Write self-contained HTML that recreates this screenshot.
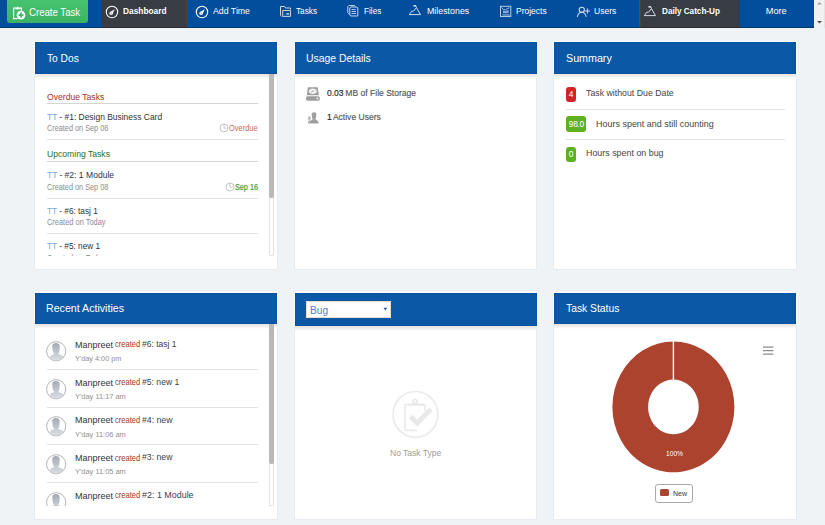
<!DOCTYPE html>
<html><head><meta charset="utf-8"><style>
html,body{margin:0;padding:0;}
body{width:825px;height:525px;overflow:hidden;position:relative;background:#eff3f6;font-family:"Liberation Sans",sans-serif;}
.t{position:absolute;white-space:pre;line-height:1;}
.pn{position:absolute;background:#fff;border:1.2px solid #e7ecf3;border-bottom-width:1.6px;box-sizing:border-box;}
.pw{position:absolute;background:#fff;}
.ph{position:absolute;background:#0b59a6;box-shadow:inset 0 0 1px 0.5px #004d9a;}
.sh{position:absolute;height:5px;background:linear-gradient(rgba(215,195,180,0.45),rgba(0,0,0,0.08) 35%,rgba(0,0,0,0));}
</style></head><body>
<div style="position:absolute;left:0;top:0;width:814px;height:28px;background:#034e9c"></div>
<div style="position:absolute;left:102px;top:0;width:85px;height:28px;background:#383d44;box-shadow:inset -1px 0 0 #4b4238"></div>
<div style="position:absolute;left:640px;top:0;width:100px;height:28px;background:#383d44;box-shadow:inset 1px 0 0 #4b4238"></div>
<div style="position:absolute;left:639px;top:0;width:1px;height:27px;background:#0a5cb8"></div>
<div style="position:absolute;left:0;top:27px;width:814px;height:1px;background:rgba(0,0,0,0.28)"></div>
<div style="position:absolute;left:814px;top:0;width:11px;height:28px;background:#f1f1f1;border-right:1px solid #e4e4e4;box-sizing:border-box"></div>
<svg style="position:absolute;left:814px;top:0" width="11" height="28"><path d="M3 4.5 L5.5 2 L8 4.5Z" fill="#a3a3a3"/><path d="M3 21 L5.5 23.5 L8 21Z" fill="#505050"/></svg>
<div style="position:absolute;left:7px;top:0;width:81px;height:23.3px;background:linear-gradient(#47c26e,#3ab462);border-radius:0 0 3px 3px"></div>
<svg style="position:absolute;left:8px;top:2px" width="24" height="22" viewBox="0 0 24 22">
<path d="M9.6 16.6 H5.6 V6.2 H8 M11.2 6.2 H13.4 V9.2" fill="none" stroke="#fff" stroke-width="1.2"/>
<path d="M7.6 7.2 V5.6 H8.6 Q9.5 3.6 10.4 5.6 H11.6 V7.2 Z" fill="#fff"/>
<circle cx="13" cy="13.1" r="4.4" fill="#fff"/>
<path d="M13 10.6 V15.6 M10.5 13.1 H15.5" stroke="#3cb863" stroke-width="1.7"/>
</svg>
<div class="t" style="left:28.70px;top:7.67px;font-size:10.2px;color:#fff;transform:scaleX(0.9436);transform-origin:0 0;">Create Task</div>
<svg style="position:absolute;left:105px;top:4.5px" width="14" height="14" viewBox="0 0 14 14">
<circle cx="7" cy="7" r="5.7" fill="none" stroke="#fff" stroke-width="1.1"/>
<path d="M4.9 7.3 L9.8 4.2 L7.2 9.4 Z" fill="#fff"/><circle cx="6.1" cy="8.2" r="1.7" fill="#fff"/><circle cx="6.1" cy="8.2" r="0.6" fill="#777"/></svg>
<div class="t" style="left:123.00px;top:7.01px;font-size:9.2px;color:#fff;font-weight:bold;transform:scaleX(0.9079);transform-origin:0 0;">Dashboard</div>
<svg style="position:absolute;left:195px;top:4.5px" width="14" height="14" viewBox="0 0 14 14">
<circle cx="7" cy="7" r="5.7" fill="none" stroke="#fff" stroke-width="1.1"/>
<path d="M4.9 7.3 L9.8 4.2 L7.2 9.4 Z" fill="#fff"/><circle cx="6.1" cy="8.2" r="1.7" fill="#fff"/><circle cx="6.1" cy="8.2" r="0.6" fill="#777"/></svg>
<div class="t" style="left:213.00px;top:7.21px;font-size:9.2px;color:#fff;transform:scaleX(0.9530);transform-origin:0 0;">Add Time</div>
<svg style="position:absolute;left:277px;top:2px" width="24" height="22" viewBox="0 0 24 22">
<path d="M3.5 13.5 V4.5 H7.6 L8.6 6 H13.5 V7.5" fill="none" stroke="#c9d6e8" stroke-width="1"/>
<path d="M5.7 14.4 V8.5 H13.5 V14.4 Z" fill="none" stroke="#c9d6e8" stroke-width="1"/>
<path d="M3.5 13.5 L4.5 14.4" stroke="#c9d6e8" stroke-width="1"/>
<rect x="9.3" y="11.2" width="2.8" height="1.4" fill="#c9d6e8"/></svg>
<div class="t" style="left:296.30px;top:7.21px;font-size:9.2px;color:#fff;transform:scaleX(0.8959);transform-origin:0 0;">Tasks</div>
<svg style="position:absolute;left:344px;top:2px" width="24" height="22" viewBox="0 0 24 22">
<path d="M5.5 12.5 L3.8 10.5 V4.5 L4.8 3.5 H10.5 L11.5 4.5" fill="none" stroke="#c9d6e8" stroke-width="1"/>
<path d="M5.8 6 L6.8 5 H12.8 L13.8 6 V14 H6.8 L5.8 13 Z" fill="none" stroke="#c9d6e8" stroke-width="1"/>
<path d="M7.5 7.5 H11.5 M7.5 9.5 H12 M7.5 11.5 H12" stroke="#c9d6e8" stroke-width="0.9"/></svg>
<div class="t" style="left:363.70px;top:7.21px;font-size:9.2px;color:#fff;transform:scaleX(0.8912);transform-origin:0 0;">Files</div>
<svg style="position:absolute;left:404px;top:0px" width="24" height="22" viewBox="0 0 24 22">
<path d="M5.3 14.6 H16.5 L12.4 7.6" fill="none" stroke="#d0dae8" stroke-width="1"/>
<path d="M5.3 14.6 L7.7 11.2 H9.5 L12.5 7.5 L12 6" fill="none" stroke="#d0dae8" stroke-width="1"/>
<rect x="9.4" y="5" width="2.6" height="1.6" fill="#d0dae8"/></svg>
<div class="t" style="left:427.40px;top:7.21px;font-size:9.2px;color:#fff;transform:scaleX(0.9619);transform-origin:0 0;">Milestones</div>
<svg style="position:absolute;left:497px;top:2px" width="24" height="22" viewBox="0 0 24 22">
<rect x="3.5" y="4.3" width="10.3" height="10.2" fill="none" stroke="#b7c8df" stroke-width="1"/>
<path d="M4.5 5.5 L6.5 7.5 L8.5 8 L10.5 6.5 L12.3 5.8" stroke="#b7c8df" stroke-width="0.9" fill="none"/><path d="M6 8.5 L8.5 9.2 L11.5 7.8 V11.2 H6 Z" fill="#8aa6cc"/><path d="M5.5 13 H12.5 L12.8 13.6" stroke="#b7c8df" stroke-width="0.9" fill="none"/></svg>
<div class="t" style="left:516.30px;top:7.21px;font-size:9.2px;color:#fff;transform:scaleX(0.9244);transform-origin:0 0;">Projects</div>
<svg style="position:absolute;left:574px;top:2px" width="24" height="22" viewBox="0 0 24 22">
<circle cx="7.8" cy="7.8" r="2.6" fill="none" stroke="#d0dae8" stroke-width="1.1"/>
<path d="M3.3 14.8 Q4.5 10.3 7.8 10.3 Q11 10.3 12.3 14.8" fill="none" stroke="#d0dae8" stroke-width="1.1"/>
<path d="M13.4 6.4 V11.6 M10.8 9 H16" stroke="#d0dae8" stroke-width="1"/></svg>
<div class="t" style="left:593.50px;top:7.21px;font-size:9.2px;color:#fff;transform:scaleX(0.9287);transform-origin:0 0;">Users</div>
<svg style="position:absolute;left:639px;top:1px" width="24" height="22" viewBox="0 0 24 22">
<path d="M5.3 14.6 H16.5 L12.4 7.6" fill="none" stroke="#d0dae8" stroke-width="1"/>
<path d="M5.3 14.6 L7.7 11.2 H9.5 L12.5 7.5 L12 6" fill="none" stroke="#d0dae8" stroke-width="1"/>
<rect x="9.4" y="5" width="2.6" height="1.6" fill="#d0dae8"/></svg>
<div class="t" style="left:661.70px;top:7.01px;font-size:9.2px;color:#fff;font-weight:bold;transform:scaleX(0.8867);transform-origin:0 0;">Daily Catch-Up</div>
<div class="t" style="left:765.80px;top:7.21px;font-size:9.2px;color:#fff;">More</div>
<div class="pn" style="left:34px;top:41px;width:243.5px;height:228.7px"></div>
<div class="pw" style="left:34px;top:41px;width:243.5px;height:32.599999999999994px"></div>
<div class="ph" style="left:35px;top:42px;width:242.0px;height:31.599999999999994px"></div>
<div class="sh" style="left:35px;top:73.6px;width:241.5px"></div>
<div class="pn" style="left:293.5px;top:41px;width:243.5px;height:228.7px"></div>
<div class="pw" style="left:293.5px;top:41px;width:243.5px;height:32.599999999999994px"></div>
<div class="ph" style="left:294.5px;top:42px;width:242.0px;height:31.599999999999994px"></div>
<div class="sh" style="left:294.5px;top:73.6px;width:241.5px"></div>
<div class="pn" style="left:553px;top:41px;width:243.5px;height:228.7px"></div>
<div class="pw" style="left:553px;top:41px;width:243.5px;height:32.599999999999994px"></div>
<div class="ph" style="left:554px;top:42px;width:242.0px;height:31.599999999999994px"></div>
<div class="sh" style="left:554px;top:73.6px;width:241.5px"></div>
<div class="pn" style="left:34px;top:292px;width:243.5px;height:228px"></div>
<div class="pw" style="left:34px;top:292px;width:243.5px;height:32px"></div>
<div class="ph" style="left:35px;top:293px;width:242.0px;height:31px"></div>
<div class="sh" style="left:35px;top:324px;width:241.5px"></div>
<div class="pn" style="left:293.5px;top:292px;width:243.5px;height:228px"></div>
<div class="pw" style="left:293.5px;top:292px;width:243.5px;height:33.5px"></div>
<div class="ph" style="left:294.5px;top:293px;width:242.0px;height:32.5px"></div>
<div class="sh" style="left:294.5px;top:325.5px;width:241.5px"></div>
<div class="pn" style="left:553px;top:292px;width:243.5px;height:228px"></div>
<div class="pw" style="left:553px;top:292px;width:243.5px;height:32px"></div>
<div class="ph" style="left:554px;top:293px;width:242.0px;height:31px"></div>
<div class="sh" style="left:554px;top:324px;width:241.5px"></div>
<div class="t" style="left:47.00px;top:52.69px;font-size:11px;color:#fff;transform:scaleX(0.9266);transform-origin:0 0;">To Dos</div>
<div class="t" style="left:306.40px;top:52.69px;font-size:11px;color:#fff;transform:scaleX(0.9456);transform-origin:0 0;">Usage Details</div>
<div class="t" style="left:566.40px;top:52.69px;font-size:11px;color:#fff;transform:scaleX(0.9728);transform-origin:0 0;">Summary</div>
<div class="t" style="left:46.40px;top:303.19px;font-size:11px;color:#fff;transform:scaleX(0.9661);transform-origin:0 0;">Recent Activities</div>
<div class="t" style="left:566.40px;top:303.19px;font-size:11px;color:#fff;transform:scaleX(0.9390);transform-origin:0 0;">Task Status</div>
<div style="position:absolute;left:269.2px;top:73.5px;width:4.5px;height:182.2px;border:1px solid #e3e3e3;box-sizing:border-box;border-radius:0 0 1px 1px;background:#fff"></div>
<div style="position:absolute;left:269.2px;top:73.5px;width:4.5px;height:124.19999999999999px;background:#b9b9b9;border-radius:0 0 2px 2px"></div>
<div style="position:absolute;left:269.2px;top:324px;width:4.5px;height:181.7px;border:1px solid #e3e3e3;box-sizing:border-box;border-radius:0 0 1px 1px;background:#fff"></div>
<div style="position:absolute;left:269.2px;top:324px;width:4.5px;height:139.7px;background:#b9b9b9;border-radius:0 0 2px 2px"></div>
<div style="position:absolute;left:35px;top:73.5px;width:234px;height:182px;overflow:hidden"><div style="position:absolute;left:-35px;top:-73.5px;width:825px;height:525px"><div class="t" style="left:47.00px;top:91.87px;font-size:9.6px;color:#a63424;transform:scaleX(0.8976);transform-origin:0 0;">Overdue Tasks</div><div style="position:absolute;left:47px;top:103.0px;width:211px;height:1.4px;background:#d5d5d5"></div><div class="t" style="left:47.00px;top:112.04px;font-size:9.4px;color:#78a8dc;transform:scaleX(0.9003);transform-origin:0 0;">TT</div><div class="t" style="left:57.34px;top:112.04px;font-size:9.4px;color:#333;transform:scaleX(0.9003);transform-origin:0 0;"> - #1: Design Business Card</div><div class="t" style="left:47.00px;top:124.32px;font-size:8.6px;color:#8d8d8d;transform:scaleX(0.8496);transform-origin:0 0;">Created on Sep 08</div><svg style="position:absolute;left:218.5px;top:123.19999999999999px" width="10" height="10"><circle cx="5" cy="5" r="4" fill="none" stroke="#c4c4c4" stroke-width="1"/><path d="M5 1.8 V5.2 H7.6" fill="none" stroke="#c4c4c4" stroke-width="0.9"/></svg><div class="t" style="left:228.70px;top:124.32px;font-size:8.6px;color:#d46655;transform:scaleX(0.8660);transform-origin:0 0;">Overdue</div><div style="position:absolute;left:47px;top:138.7px;width:211px;height:1px;background:#e3e3e3"></div><div class="t" style="left:47.00px;top:149.17px;font-size:9.6px;color:#1f6f22;transform:scaleX(0.8965);transform-origin:0 0;">Upcoming Tasks</div><div style="position:absolute;left:47px;top:160.8px;width:211px;height:1.4px;background:#d5d5d5"></div><div class="t" style="left:47.00px;top:169.84px;font-size:9.4px;color:#78a8dc;transform:scaleX(0.9126);transform-origin:0 0;">TT</div><div class="t" style="left:57.48px;top:169.84px;font-size:9.4px;color:#333;transform:scaleX(0.9126);transform-origin:0 0;"> - #2: 1 Module</div><div class="t" style="left:47.00px;top:183.32px;font-size:8.6px;color:#8d8d8d;transform:scaleX(0.8496);transform-origin:0 0;">Created on Sep 08</div><svg style="position:absolute;left:224.5px;top:182.2px" width="10" height="10"><circle cx="5" cy="5" r="4" fill="none" stroke="#c4c4c4" stroke-width="1"/><path d="M5 1.8 V5.2 H7.6" fill="none" stroke="#c4c4c4" stroke-width="0.9"/></svg><div class="t" style="left:235.40px;top:183.15px;font-size:8.8px;color:#3aa33a;transform:scaleX(0.8245);transform-origin:0 0;-webkit-text-stroke:0.2px currentColor;">Sep 16</div><div style="position:absolute;left:47px;top:197.7px;width:211px;height:1px;background:#e3e3e3"></div><div class="t" style="left:47.00px;top:205.84px;font-size:9.4px;color:#78a8dc;transform:scaleX(0.8791);transform-origin:0 0;">TT</div><div class="t" style="left:57.09px;top:205.84px;font-size:9.4px;color:#333;transform:scaleX(0.8791);transform-origin:0 0;"> - #6: tasj 1</div><div class="t" style="left:47.00px;top:218.32px;font-size:8.6px;color:#8d8d8d;transform:scaleX(0.8647);transform-origin:0 0;">Created on Today</div><div style="position:absolute;left:47px;top:232.7px;width:211px;height:1px;background:#e3e3e3"></div><div class="t" style="left:47.00px;top:240.54px;font-size:9.4px;color:#78a8dc;transform:scaleX(0.8803);transform-origin:0 0;">TT</div><div class="t" style="left:57.11px;top:240.54px;font-size:9.4px;color:#333;transform:scaleX(0.8803);transform-origin:0 0;"> - #5: new 1</div><div class="t" style="left:47.00px;top:254.22px;font-size:8.6px;color:#8d8d8d;transform:scaleX(0.8647);transform-origin:0 0;">Created on Today</div></div></div>
<svg style="position:absolute;left:305px;top:86px" width="16" height="16" viewBox="0 0 16 16">
<path d="M3 1.2 H12.6 L13.9 9.2 H1.7 Z" fill="#9d9d9d"/>
<ellipse cx="7.8" cy="5.2" rx="3.9" ry="2.7" fill="#f2f2f2"/><path d="M6 6.4 L8.9 4.4" stroke="#9d9d9d" stroke-width="0.9"/>
<rect x="1" y="10.3" width="13.8" height="4.4" rx="1.6" fill="#9d9d9d"/><circle cx="12.3" cy="12.5" r="0.9" fill="#f2f2f2"/></svg>
<div class="t" style="left:326.50px;top:88.30px;font-size:9.8px;color:#222;transform:scaleX(0.8712);transform-origin:0 0;-webkit-text-stroke:0.15px currentColor;">0.03</div>
<div class="t" style="left:343.12px;top:88.30px;font-size:9.8px;color:#555;transform:scaleX(0.8712);transform-origin:0 0;-webkit-text-stroke:0.15px currentColor;"> MB of File Storage</div>
<svg style="position:absolute;left:305px;top:111px" width="16" height="14" viewBox="0 0 16 14">
<path d="M2.8 12.5 Q2.6 9.8 4 9.5 Q2.7 8.5 3 6.6 Q3.2 5 4.4 5 Q5.6 5 5.8 6.6 Q6 8.5 4.8 9.5 Q5.6 9.8 6 10.6 L5 12.5 Z" fill="#b9b9b9"/>
<circle cx="9" cy="3.6" r="2.4" fill="#9f9f9f"/><path d="M6.8 4 Q6.8 7.4 8 8.3 Q5 9 4.4 12.6 H13.8 Q13.3 9 10.1 8.3 Q11.3 7.4 11.2 4 Z" fill="#9f9f9f"/></svg>
<div class="t" style="left:326.50px;top:112.30px;font-size:9.8px;color:#222;transform:scaleX(0.8708);transform-origin:0 0;-webkit-text-stroke:0.15px currentColor;">1</div>
<div class="t" style="left:331.25px;top:112.30px;font-size:9.8px;color:#555;transform:scaleX(0.8708);transform-origin:0 0;-webkit-text-stroke:0.15px currentColor;"> Active Users</div>
<div style="position:absolute;left:566.3px;top:86.6px;width:9.400000000000091px;height:15.800000000000011px;background:#d2232a;border-radius:3px;color:#fff;font-size:8.4px;line-height:15.800000000000011px;text-align:center;letter-spacing:-0.3px">4</div>
<div class="t" style="left:586.00px;top:88.20px;font-size:9.8px;color:#444;transform:scaleX(0.8949);transform-origin:0 0;">Task without Due Date</div>
<div style="position:absolute;left:566.4px;top:108.6px;width:218.20000000000005px;height:1px;background:#e3e3e3"></div>
<div style="position:absolute;left:566.3px;top:116.3px;width:20.200000000000045px;height:16.10000000000001px;background:#5db123;border-radius:3px;color:#fff;font-size:8.4px;line-height:16.10000000000001px;text-align:center;letter-spacing:-0.3px">98.0</div>
<div class="t" style="left:595.90px;top:118.60px;font-size:9.8px;color:#444;transform:scaleX(0.9154);transform-origin:0 0;">Hours spent and still counting</div>
<div style="position:absolute;left:566.4px;top:138.6px;width:218.20000000000005px;height:1px;background:#e3e3e3"></div>
<div style="position:absolute;left:566.3px;top:146.5px;width:9.400000000000091px;height:15.800000000000011px;background:#5db123;border-radius:3px;color:#fff;font-size:8.4px;line-height:15.800000000000011px;text-align:center;letter-spacing:-0.3px">0</div>
<div class="t" style="left:586.00px;top:148.20px;font-size:9.8px;color:#444;transform:scaleX(0.9070);transform-origin:0 0;">Hours spent on bug</div>
<div style="position:absolute;left:35px;top:324px;width:234px;height:181.7px;overflow:hidden"><div style="position:absolute;left:-35px;top:-324px;width:825px;height:525px"><svg style="position:absolute;left:45px;top:340.0px" width="23" height="23" viewBox="0 0 23 23"><defs><linearGradient id="ag0" x1="0" y1="0" x2="0" y2="1"><stop offset="0" stop-color="#a3aab4"/><stop offset="1" stop-color="#e3e7ec"/></linearGradient><clipPath id="ac0"><circle cx="11.15" cy="11.25" r="9.3"/></clipPath></defs><circle cx="11.15" cy="11.25" r="9.6" fill="#fff" stroke="#b4b4b4" stroke-width="1"/><g clip-path="url(#ac0)"><path d="M7.2 5.5 Q7.6 3 10.8 3 Q14.6 3 14.7 6 L14.5 10.5 Q14 12.8 13.3 13.6 L13.3 14.2 Q17.6 14.8 18.5 17 L18.5 23 H5 V16.8 Q5.5 14.8 9.2 14.2 L9.2 13.6 Q8 12.8 7.6 10.5 Z" fill="url(#ag0)"/></g></svg><div class="t" style="left:74.60px;top:339.94px;font-size:9.4px;color:#333;transform:scaleX(0.9607);transform-origin:0 0;">Manpreet</div><div class="t" style="left:114.80px;top:340.49px;font-size:8.4px;color:#a83322;transform:scaleX(0.8982);transform-origin:0 0;">created</div><div class="t" style="left:142.40px;top:339.24px;font-size:9.4px;color:#3b4048;transform:scaleX(0.9066);transform-origin:0 0;">#6: tasj 1</div><div class="t" style="left:74.60px;top:355.11px;font-size:7.9px;color:#8f8f8f;transform:scaleX(0.9235);transform-origin:0 0;">Y'day 4:00 pm</div><div style="position:absolute;left:47px;top:368.9px;width:211px;height:1px;background:#e3e3e3"></div><svg style="position:absolute;left:45px;top:377.7px" width="23" height="23" viewBox="0 0 23 23"><defs><linearGradient id="ag1" x1="0" y1="0" x2="0" y2="1"><stop offset="0" stop-color="#a3aab4"/><stop offset="1" stop-color="#e3e7ec"/></linearGradient><clipPath id="ac1"><circle cx="11.15" cy="11.25" r="9.3"/></clipPath></defs><circle cx="11.15" cy="11.25" r="9.6" fill="#fff" stroke="#b4b4b4" stroke-width="1"/><g clip-path="url(#ac1)"><path d="M7.2 5.5 Q7.6 3 10.8 3 Q14.6 3 14.7 6 L14.5 10.5 Q14 12.8 13.3 13.6 L13.3 14.2 Q17.6 14.8 18.5 17 L18.5 23 H5 V16.8 Q5.5 14.8 9.2 14.2 L9.2 13.6 Q8 12.8 7.6 10.5 Z" fill="url(#ag1)"/></g></svg><div class="t" style="left:74.60px;top:377.64px;font-size:9.4px;color:#333;transform:scaleX(0.9607);transform-origin:0 0;">Manpreet</div><div class="t" style="left:114.80px;top:378.19px;font-size:8.4px;color:#a83322;transform:scaleX(0.8982);transform-origin:0 0;">created</div><div class="t" style="left:142.40px;top:376.94px;font-size:9.4px;color:#3b4048;transform:scaleX(0.9192);transform-origin:0 0;">#5: new 1</div><div class="t" style="left:74.60px;top:392.81px;font-size:7.9px;color:#8f8f8f;transform:scaleX(0.9401);transform-origin:0 0;">Y'day 11:17 am</div><div style="position:absolute;left:47px;top:406.59999999999997px;width:211px;height:1px;background:#e3e3e3"></div><svg style="position:absolute;left:45px;top:415.4px" width="23" height="23" viewBox="0 0 23 23"><defs><linearGradient id="ag2" x1="0" y1="0" x2="0" y2="1"><stop offset="0" stop-color="#a3aab4"/><stop offset="1" stop-color="#e3e7ec"/></linearGradient><clipPath id="ac2"><circle cx="11.15" cy="11.25" r="9.3"/></clipPath></defs><circle cx="11.15" cy="11.25" r="9.6" fill="#fff" stroke="#b4b4b4" stroke-width="1"/><g clip-path="url(#ac2)"><path d="M7.2 5.5 Q7.6 3 10.8 3 Q14.6 3 14.7 6 L14.5 10.5 Q14 12.8 13.3 13.6 L13.3 14.2 Q17.6 14.8 18.5 17 L18.5 23 H5 V16.8 Q5.5 14.8 9.2 14.2 L9.2 13.6 Q8 12.8 7.6 10.5 Z" fill="url(#ag2)"/></g></svg><div class="t" style="left:74.60px;top:415.34px;font-size:9.4px;color:#333;transform:scaleX(0.9607);transform-origin:0 0;">Manpreet</div><div class="t" style="left:114.80px;top:415.89px;font-size:8.4px;color:#a83322;transform:scaleX(0.8982);transform-origin:0 0;">created</div><div class="t" style="left:142.40px;top:414.64px;font-size:9.4px;color:#3b4048;transform:scaleX(0.9274);transform-origin:0 0;">#4: new</div><div class="t" style="left:74.60px;top:430.51px;font-size:7.9px;color:#8f8f8f;transform:scaleX(0.9401);transform-origin:0 0;">Y'day 11:06 am</div><div style="position:absolute;left:47px;top:444.29999999999995px;width:211px;height:1px;background:#e3e3e3"></div><svg style="position:absolute;left:45px;top:453.1px" width="23" height="23" viewBox="0 0 23 23"><defs><linearGradient id="ag3" x1="0" y1="0" x2="0" y2="1"><stop offset="0" stop-color="#a3aab4"/><stop offset="1" stop-color="#e3e7ec"/></linearGradient><clipPath id="ac3"><circle cx="11.15" cy="11.25" r="9.3"/></clipPath></defs><circle cx="11.15" cy="11.25" r="9.6" fill="#fff" stroke="#b4b4b4" stroke-width="1"/><g clip-path="url(#ac3)"><path d="M7.2 5.5 Q7.6 3 10.8 3 Q14.6 3 14.7 6 L14.5 10.5 Q14 12.8 13.3 13.6 L13.3 14.2 Q17.6 14.8 18.5 17 L18.5 23 H5 V16.8 Q5.5 14.8 9.2 14.2 L9.2 13.6 Q8 12.8 7.6 10.5 Z" fill="url(#ag3)"/></g></svg><div class="t" style="left:74.60px;top:453.04px;font-size:9.4px;color:#333;transform:scaleX(0.9607);transform-origin:0 0;">Manpreet</div><div class="t" style="left:114.80px;top:453.59px;font-size:8.4px;color:#a83322;transform:scaleX(0.8982);transform-origin:0 0;">created</div><div class="t" style="left:142.40px;top:452.34px;font-size:9.4px;color:#3b4048;transform:scaleX(0.9274);transform-origin:0 0;">#3: new</div><div class="t" style="left:74.60px;top:468.21px;font-size:7.9px;color:#8f8f8f;transform:scaleX(0.9401);transform-origin:0 0;">Y'day 11:05 am</div><div style="position:absolute;left:47px;top:482.0px;width:211px;height:1px;background:#e3e3e3"></div><svg style="position:absolute;left:45px;top:490.8px" width="23" height="23" viewBox="0 0 23 23"><defs><linearGradient id="ag4" x1="0" y1="0" x2="0" y2="1"><stop offset="0" stop-color="#a3aab4"/><stop offset="1" stop-color="#e3e7ec"/></linearGradient><clipPath id="ac4"><circle cx="11.15" cy="11.25" r="9.3"/></clipPath></defs><circle cx="11.15" cy="11.25" r="9.6" fill="#fff" stroke="#b4b4b4" stroke-width="1"/><g clip-path="url(#ac4)"><path d="M7.2 5.5 Q7.6 3 10.8 3 Q14.6 3 14.7 6 L14.5 10.5 Q14 12.8 13.3 13.6 L13.3 14.2 Q17.6 14.8 18.5 17 L18.5 23 H5 V16.8 Q5.5 14.8 9.2 14.2 L9.2 13.6 Q8 12.8 7.6 10.5 Z" fill="url(#ag4)"/></g></svg><div class="t" style="left:74.60px;top:490.74px;font-size:9.4px;color:#333;transform:scaleX(0.9607);transform-origin:0 0;">Manpreet</div><div class="t" style="left:114.80px;top:491.29px;font-size:8.4px;color:#a83322;transform:scaleX(0.8982);transform-origin:0 0;">created</div><div class="t" style="left:142.40px;top:490.04px;font-size:9.4px;color:#3b4048;transform:scaleX(0.9516);transform-origin:0 0;">#2: 1 Module</div></div></div>
<div style="position:absolute;left:306.3px;top:300.7px;width:84.4px;height:17px;background:#fff;border:1px solid #e9dccd;box-sizing:border-box"></div>
<div class="t" style="left:309.90px;top:304.99px;font-size:11px;color:#4d82c0;transform:scaleX(0.9244);transform-origin:0 0;">Bug</div>
<svg style="position:absolute;left:383px;top:307px" width="5" height="4"><path d="M0.5 0.7 H4.2 L2.35 3.4Z" fill="#2b5a92"/></svg>
<svg style="position:absolute;left:390px;top:389px" width="52" height="52" viewBox="0 0 52 52">
<ellipse cx="25.5" cy="25.4" rx="22.4" ry="22.9" fill="none" stroke="#ebebeb" stroke-width="1.7"/>
<circle cx="25" cy="12.6" r="2" fill="none" stroke="#e6e6e6" stroke-width="1.5"/>
<path d="M18.5 15.6 H35" fill="none" stroke="#e6e6e6" stroke-width="2"/>
<path d="M22 15.6 H15 V40.2 Q15 41.3 16 41.3 H27 M35 15.6 V22" fill="none" stroke="#ebebeb" stroke-width="1.7"/>
<path d="M18.8 29.2 L22.3 25.8 L27.2 30.6 L39.2 18.6 L42.8 22.1 L27.2 37.6 Z" fill="#e9e9e9"/></svg>
<div class="t" style="left:389.90px;top:448.63px;font-size:9.3px;color:#9d9d9d;transform:scaleX(0.9127);transform-origin:0 0;">No Task Type</div>
<svg style="position:absolute;left:763px;top:346px" width="11" height="10"><path d="M0 1.2 H10.4 M0 4.7 H10.4 M0 8.2 H10.4" stroke="#8a8a8a" stroke-width="1.3"/></svg>
<svg style="position:absolute;left:0;top:0" width="825" height="525">
<path fill-rule="evenodd" fill="#ac432e" d="M673.4 341.5 A61 65.4 0 1 1 673.39 341.5 Z M673.4 379.6 A25.3 27.35 0 1 0 673.41 379.6 Z"/>
<rect x="672.7" y="341" width="1.4" height="39" fill="#fff"/></svg>
<div class="t" style="left:666.40px;top:450.20px;font-size:7.8px;color:#fff;transform:scaleX(0.8514);transform-origin:0 0;">100%</div>
<div style="position:absolute;left:655.2px;top:484.1px;width:37.4px;height:18.5px;box-sizing:border-box;border:1px solid #a9a9a9;border-radius:3px;background:#fff"></div>
<div style="position:absolute;left:659.9px;top:488.5px;width:9.1px;height:7.6px;background:#ac432e;border-radius:1.5px"></div>
<div class="t" style="left:673.00px;top:489.53px;font-size:8px;color:#2f3b4c;transform:scaleX(0.8831);transform-origin:0 0;">New</div>
</body></html>
